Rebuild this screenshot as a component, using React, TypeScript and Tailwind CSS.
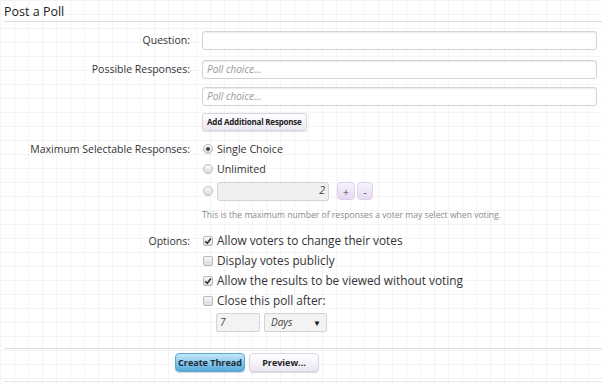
import React from 'react'

const gridBg =
  'bg-white bg-[linear-gradient(to_right,#f4f4f4_1px,transparent_1px),linear-gradient(to_bottom,#f4f4f4_1px,transparent_1px)] bg-[size:14px_14px]'

function Radio({ checked }: { checked?: boolean }) {
  return (
    <span className="flex h-[10px] w-[10px] shrink-0 items-center justify-center rounded-full border border-[#b9b9b9] bg-[linear-gradient(#fafafa,#dcdcdc)]">
      {checked && <span className="h-[4px] w-[4px] rounded-full bg-[#444]" />}
    </span>
  )
}

function Check({ checked }: { checked?: boolean }) {
  return (
    <span className="flex h-[10px] w-[10px] shrink-0 items-center justify-center rounded-[2px] border border-[#b9b9b9] bg-[linear-gradient(#fafafa,#dcdcdc)]">
      {checked && (
        <svg width="8" height="8" viewBox="0 0 8 8">
          <path d="M1.2 4.2 L3.2 6.2 L6.9 1.4" fill="none" stroke="#333" strokeWidth="1.6" />
        </svg>
      )}
    </span>
  )
}

function Row({ label, children, className = '' }: { label?: string; children: React.ReactNode; className?: string }) {
  return (
    <div className={`flex items-center ${className}`}>
      <div className="w-[190px] shrink-0 text-right text-[10.5px] leading-[15px] text-[#333]">{label}</div>
      <div className="ml-[12px] flex flex-1 items-center pr-[5px]">{children}</div>
    </div>
  )
}

const textInput =
  'flex h-[19px] w-full items-center rounded-[3px] border border-[#d3d3d3] bg-white px-[4px] text-[10px] italic text-[#999] shadow-[inset_0_1px_1px_rgba(0,0,0,0.08)]'

export default function App() {
  return (
    <div className={`h-[384px] w-[602px] overflow-hidden ${gridBg} font-['Open_Sans',sans-serif] text-[#333]`}>
      {/* Title */}
      <div className="ml-[4px] border-b border-[#dcdcdc] pt-[4px] pb-[2px] text-[12.5px] leading-[15px] text-[#222]">
        Post a Poll
      </div>

      <Row label="Question:" className="mt-[9px]">
        <div className={textInput} />
      </Row>

      <Row label="Possible Responses:" className="mt-[10px]">
        <div className={textInput}>Poll choice...</div>
      </Row>
      <Row className="mt-[8px]">
        <div className={textInput}>Poll choice...</div>
      </Row>
      <Row className="mt-[7px]">
        <button className="flex h-[18px] items-center rounded-[3px] border border-[#d8d4e4] bg-[linear-gradient(#ffffff,#ebe7f3)] px-[4px] text-[8px] font-bold tracking-[-0.2px] text-[#222] shadow-[0_1px_1px_rgba(0,0,0,0.12)]">
          Add Additional Response
        </button>
      </Row>

      {/* Maximum selectable */}
      <Row label="Maximum Selectable Responses:" className="mt-[8px] h-[20px]">
        <label className="flex items-center gap-[4px] pl-[1px] text-[10.7px]">
          <Radio checked />
          Single Choice
        </label>
      </Row>
      <Row className="h-[20px]">
        <label className="flex items-center gap-[4px] pl-[1px] text-[10.7px]">
          <Radio />
          Unlimited
        </label>
      </Row>
      <Row className="mt-[2px] h-[20px]">
        <div className="flex items-center gap-[4px] pl-[1px]">
          <Radio />
          <div className="flex h-[19px] w-[112px] items-center justify-end rounded-[3px] border border-[#d3d3d3] bg-[#f0f0f0] px-[3px] text-[10.5px] italic text-[#444]">
            2
          </div>
          <div className="ml-[4px] flex gap-[2px]">
            <button className="flex h-[18px] w-[18px] items-center justify-center rounded-[4px] border border-[#ddd0ea] bg-[linear-gradient(#f8f3fc,#e6d9f2)] text-[11px] leading-none text-[#555]">
              +
            </button>
            <button className="flex h-[18px] w-[16px] items-center justify-center rounded-[4px] border border-[#ddd0ea] bg-[linear-gradient(#f8f3fc,#e6d9f2)] text-[11px] leading-none text-[#555]">
              -
            </button>
          </div>
        </div>
      </Row>
      <Row className="mt-[8px]">
        <div className="text-[8.6px] leading-[13px] text-[#8a8a8a]">
          This is the maximum number of responses a voter may select when voting.
        </div>
      </Row>

      {/* Options */}
      <Row label="Options:" className="mt-[9px] h-[20px]">
        <label className="flex items-center gap-[4px] pl-[1px] text-[11.8px]">
          <Check checked />
          Allow voters to change their votes
        </label>
      </Row>
      <Row className="h-[20px]">
        <label className="flex items-center gap-[4px] pl-[1px] text-[11.8px]">
          <Check />
          Display votes publicly
        </label>
      </Row>
      <Row className="h-[20px]">
        <label className="flex items-center gap-[4px] pl-[1px] text-[11.8px]">
          <Check checked />
          Allow the results to be viewed without voting
        </label>
      </Row>
      <Row className="h-[20px]">
        <label className="flex items-center gap-[4px] pl-[1px] text-[11.8px]">
          <Check />
          Close this poll after:
        </label>
      </Row>
      <Row className="mt-[2px]">
        <div className="flex gap-[4px] pl-[14px]">
          <div className="flex h-[19px] w-[44px] items-center rounded-[2px] border border-[#d3d3d3] bg-[#f3f3f3] px-[3px] text-[10px] italic text-[#444]">
            7
          </div>
          <div className="flex h-[19px] w-[63px] items-center justify-between rounded-[2px] border border-[#d3d3d3] bg-[#f3f3f3] pl-[6px] pr-[5px] text-[10px] italic text-[#444]">
            Days
            <span className="text-[8px] not-italic text-[#111]">▼</span>
          </div>
        </div>
      </Row>

      {/* Submit */}
      <div className="ml-[4px] mt-[16px] border-t border-[#dcdcdc] pt-[4px]">
        <div className="flex gap-[4px] pl-[171px]">
          <button className="h-[19px] w-[70px] rounded-[4px] border border-[#5fa7d3] bg-[linear-gradient(#c4e6f7,#55abdd)] text-[9px] font-bold text-[#1d2a35] shadow-[0_1px_1px_rgba(0,0,0,0.15)]">
            Create Thread
          </button>
          <button className="h-[19px] w-[70px] rounded-[4px] border border-[#d9d5e6] bg-[linear-gradient(#ffffff,#eae6f2)] text-[9px] font-bold text-[#222] shadow-[0_1px_1px_rgba(0,0,0,0.15)]">
            Preview...
          </button>
        </div>
        <div className="mt-[9px] border-t border-[#e6e6e6]" />
      </div>
    </div>
  )
}
